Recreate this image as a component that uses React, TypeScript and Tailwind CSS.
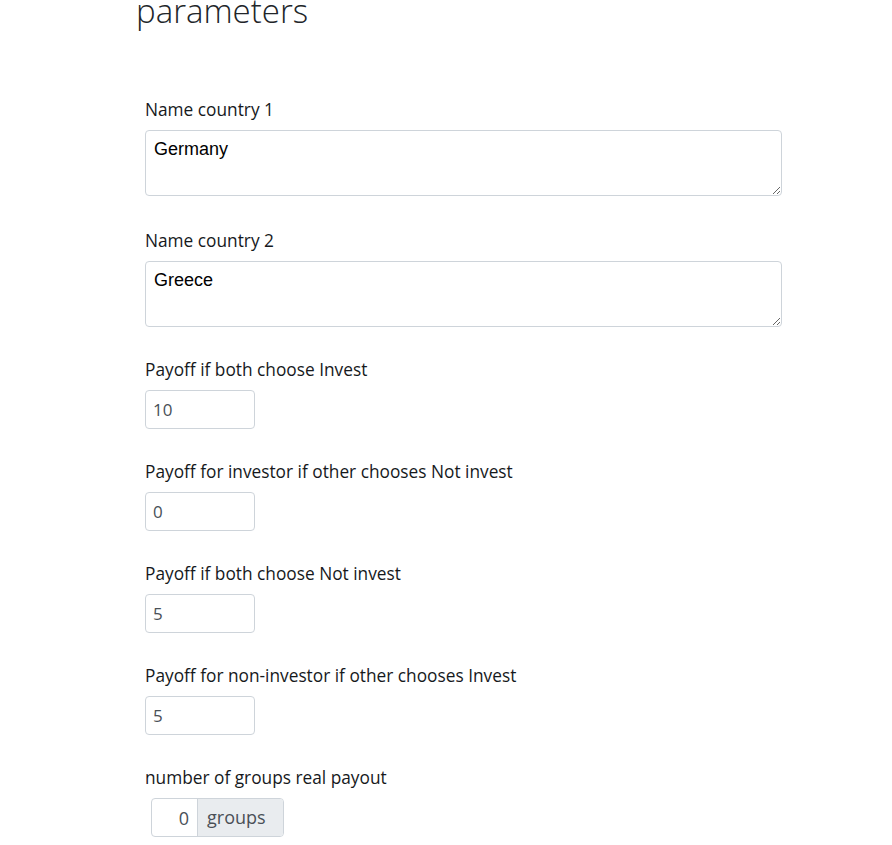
const FIELDS = [
  { label: "Payoff if both choose Invest", value: "10" },
  { label: "Payoff for investor if other chooses Not invest", value: "0" },
  { label: "Payoff if both choose Not invest", value: "5" },
  { label: "Payoff for non-investor if other chooses Invest", value: "5" },
];

const sans = "font-['Open_Sans',_'Noto_Sans',_sans-serif]";

export default function App() {
  return (
    <div className={`bg-white min-h-[845px] w-[892px] overflow-hidden text-[#212529] ${sans}`}>
      <div className="pl-[136px]">
        {/* header */}
        <h1 className="text-[33px] font-light leading-[40px] mt-[-9px] text-[#212529]">parameters</h1>

        <div className="ml-[9px] mt-[67px] w-[637px]">
          {/* text fields */}
          {["Germany", "Greece"].map((v, i) => (
            <div key={v} className={i === 0 ? "mb-[33px]" : "mb-[31px]"}>
              <label className="block text-[17.3px] leading-[24px] mb-[8px] text-[#16191c]">Name country {i + 1}</label>
              <textarea
                defaultValue={v}
                className="block w-[637px] h-[66px] rounded-[4px] border border-[#ced4da] px-[8px] py-[7px] text-[18px] leading-[22px] text-black font-['Liberation_Sans',_Arial,_sans-serif] resize-y outline-none"
              />
            </div>
          ))}

          {/* numeric fields */}
          {FIELDS.map((f) => (
            <div key={f.label} className="mb-[31px]">
              <label className="block text-[17.3px] leading-[24px] mb-[8px] text-[#16191c]">{f.label}</label>
              <input
                type="text"
                defaultValue={f.value}
                className="block w-[110px] h-[39px] rounded-[4px] border border-[#ced4da] px-[7px] text-[17px] text-[#495057] outline-none"
              />
            </div>
          ))}

          <div>
            <label className="block text-[17.3px] leading-[24px] mb-[8px] text-[#16191c]">number of groups real payout</label>
            <div className="ml-[6px] flex w-[133px] h-[39px] rounded-[4px] border border-[#ced4da] overflow-hidden">
              <input
                type="text"
                defaultValue="0"
                className="w-[45px] h-full px-[8px] text-right text-[18px] text-[#495057] outline-none"
              />
              <span className="flex-1 flex items-center bg-[#e9ecef] border-l border-[#ced4da] px-[9px] text-[18px] text-[#495057]">
                groups
              </span>
            </div>
          </div>
        </div>
      </div>
    </div>
  );
}
